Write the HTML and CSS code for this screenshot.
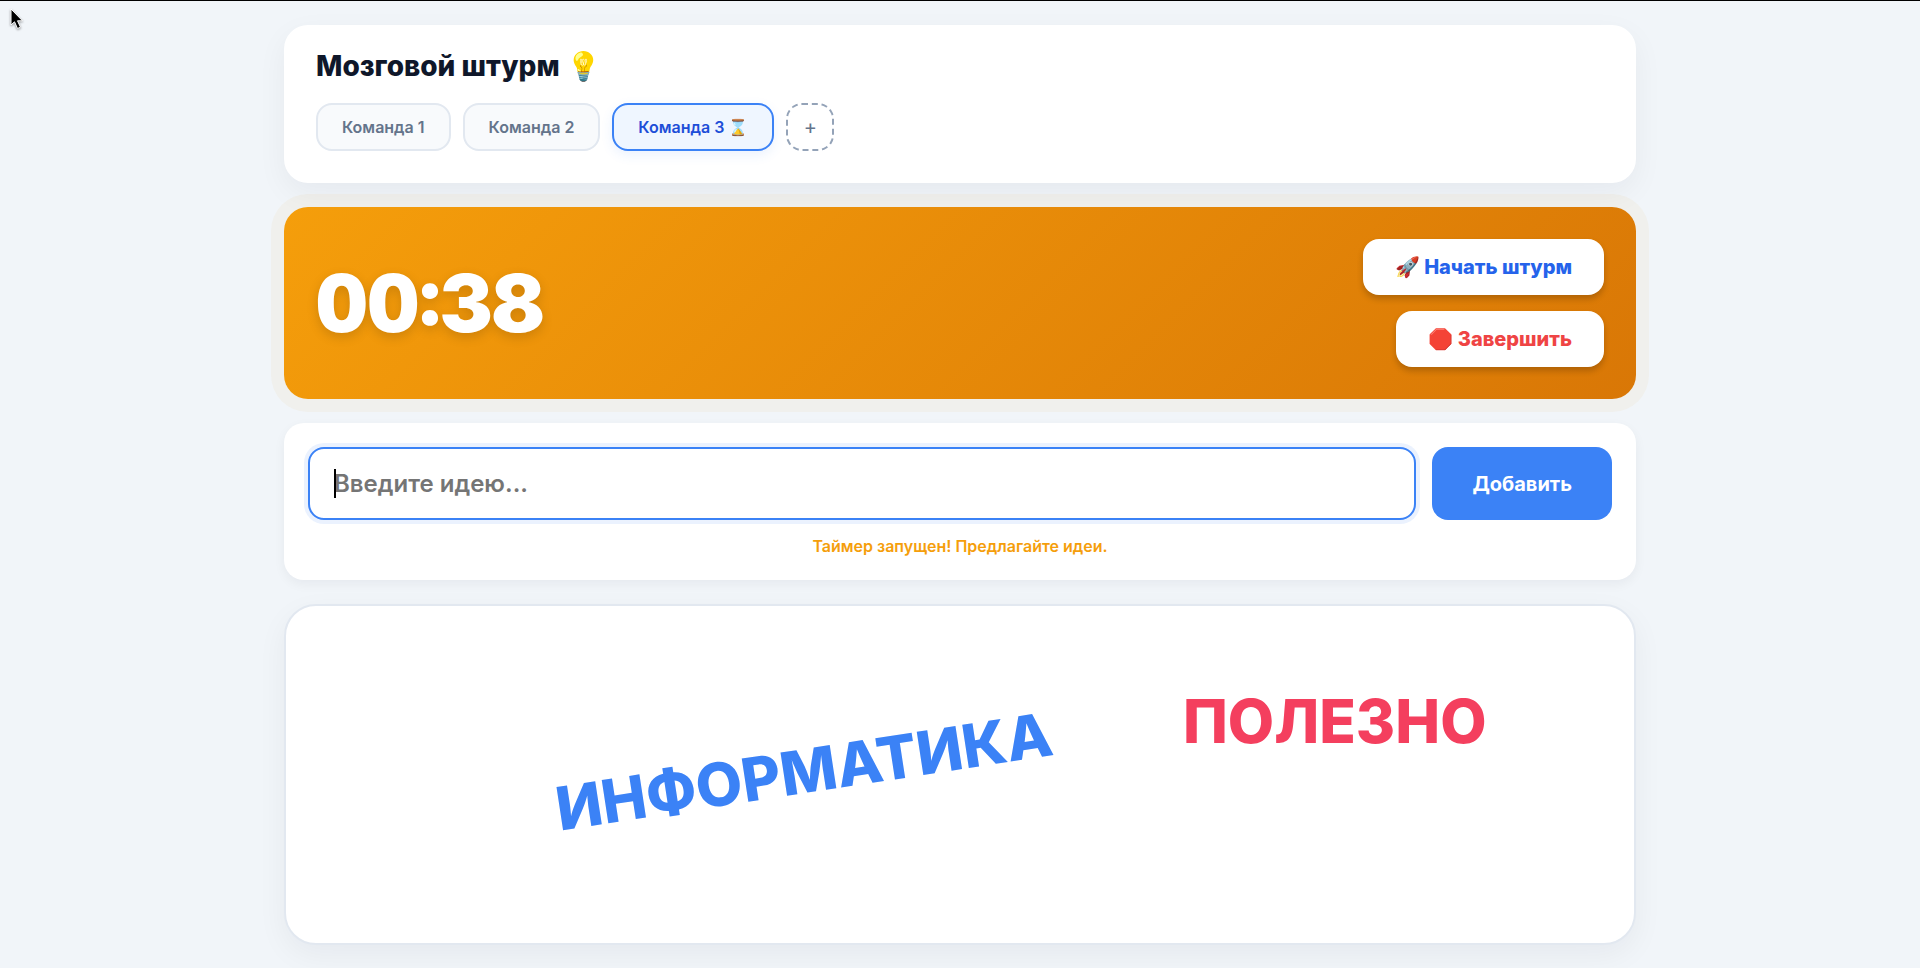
FILE: index.html
```html
<!DOCTYPE html>
<html lang="ru">
<head>
    <meta charset="UTF-8">
    <meta name="viewport" content="width=device-width, initial-scale=1.0">
    <title>Мозговой штурм</title>
    <link rel="stylesheet" href="styles.css">
</head>
<body>
<div class="container">
    <header class="header">
        <h1>Мозговой штурм 💡</h1>
        <div class="teams">
            <button class="team" type="button">Команда 1</button>
            <button class="team" type="button">Команда 2</button>
            <button class="team active" type="button">Команда 3 ⌛</button>
            <button class="team add" type="button" aria-label="Добавить команду">+</button>
        </div>
    </header>

    <section class="timer">
        <div class="time" id="time">00:38</div>
        <div class="controls">
            <button class="btn start" type="button">🚀 Начать штурм</button>
            <button class="btn stop" type="button">🛑 Завершить</button>
        </div>
    </section>

    <form class="idea-form" onsubmit="return false">
        <div class="row">
            <div class="field">
                <input type="text" id="ideaInput" placeholder="Введите идею..." aria-label="Введите идею" autocomplete="off">
                <span class="caret"></span>
            </div>
            <button class="send" type="submit">Добавить</button>
        </div>
        <p class="hint">Таймер запущен! Предлагайте идеи.</p>
    </form>

    <main class="cloud">
        <span class="word informatics">ИНФОРМАТИКА</span>
        <span class="word useful">ПОЛЕЗНО</span>
    </main>
</div>

<svg class="cursor" width="16" height="24" viewBox="0 0 16 24" aria-hidden="true">
    <path d="M1 1v16l3.500-3.200 3 6.700 3-1.300-3-6.400h5z" fill="#000" stroke="#fff" stroke-width="1"/>
</svg>
</body>
</html>
```
FILE: styles.css
```css
* {
    box-sizing: border-box;
    margin: 0;
    padding: 0;
}
body {
    font-family: Inter, "Noto Sans", sans-serif;
    background-color: #f1f5f9;
    color: #0f172a;
    border-top: 1px solid #000;
    overflow: hidden;
}
button, input {
    font-family: inherit;
}
button {
    cursor: pointer;
}
.container {
    max-width: 1400px;
    min-height: 100vh;
    margin: 0 auto;
    padding: 24px;
    display: flex;
    flex-direction: column;
    gap: 24px;
}

/* header */
.header {
    background-color: #fff;
    border-radius: 24px;
    padding: 24px 32px 32px;
    box-shadow: 0 10px 30px rgba(15, 23, 42, 0.05);
}
h1 {
    font-size: 28px;
    line-height: 34px;
    font-weight: 800;
    margin-bottom: 20px;
}
.teams {
    display: flex;
    flex-wrap: wrap;
    gap: 12px;
}
.team {
    height: 48px;
    padding: 0 24px;
    border: 2px solid #e2e8f0;
    border-radius: 16px;
    background-color: #f8fafc;
    color: #64748b;
    font-size: 16px;
    font-weight: 600;
}
.team.active {
    background-color: #eff6ff;
    border-color: #3b82f6;
    color: #1d4ed8;
    box-shadow: 0 4px 12px rgba(59, 130, 246, 0.1);
}
.team.add {
    width: 48px;
    padding: 0;
    border: 2px dashed #94a3b8;
    background-color: #fff;
    font-size: 20px;
    font-weight: 400;
}

/* timer */
.timer {
    display: flex;
    justify-content: space-between;
    align-items: center;
    padding: 32px;
    border-radius: 24px;
    background: linear-gradient(135deg, #f59e0b, #d97706);
    box-shadow: 0 0 0 13px rgba(245, 158, 11, 0.05);
}
.time {
    color: #fff;
    font-size: 80px;
    line-height: 80px;
    font-weight: 900;
    font-variant-numeric: tabular-nums;
    text-shadow: 0 4px 12px rgba(0, 0, 0, 0.15);
}
.controls {
    display: flex;
    flex-direction: column;
    align-items: flex-end;
    gap: 16px;
}
.btn {
    padding: 16px 32px;
    border: none;
    border-radius: 16px;
    background-color: #fff;
    font-size: 20px;
    line-height: 24px;
    font-weight: 800;
    box-shadow: 0 4px 6px rgba(0, 0, 0, 0.2);
}
.start {
    color: #2563eb;
}
.stop {
    color: #ef4444;
}

/* idea input */
.idea-form {
    background-color: #fff;
    border-radius: 20px;
    padding: 24px;
    box-shadow: 0 4px 12px rgba(15, 23, 42, 0.05);
}
.row {
    display: flex;
    gap: 16px;
}
.field {
    position: relative;
    flex: 1;
}
#ideaInput {
    display: block;
    width: 100%;
    height: 73px;
    padding: 0 24px;
    border: 2px solid #3b82f6;
    border-radius: 16px;
    outline: none;
    background-color: #fff;
    font-size: 24px;
    font-weight: 600;
    box-shadow: 0 0 0 4px rgba(59, 130, 246, 0.1);
}
#ideaInput::placeholder {
    color: #757575;
}
.caret {
    position: absolute;
    left: 26px;
    top: 22px;
    width: 2px;
    height: 29px;
    background-color: #000;
}
.send {
    padding: 0 40px;
    border: none;
    border-radius: 16px;
    background-color: #3b82f6;
    color: #fff;
    font-size: 20px;
    font-weight: 700;
}
.hint {
    margin-top: 16px;
    text-align: center;
    color: #f59e0b;
    font-size: 16px;
    line-height: 20px;
    font-weight: 600;
}

/* word cloud */
.cloud {
    position: relative;
    flex: 1;
    min-height: 240px;
    background-color: #fff;
    border: 2px solid #e2e8f0;
    border-radius: 32px;
    box-shadow: 0 10px 30px rgba(15, 23, 42, 0.05);
    overflow: hidden;
}
.word {
    position: absolute;
    font-size: 60px;
    line-height: 72px;
    font-weight: 800;
    white-space: nowrap;
}
.informatics {
    left: 38.4%;
    top: 49%;
    color: #3b82f6;
    transform: translate(-50%, -50%) rotate(-8.7deg);
}
.useful {
    left: 77.8%;
    top: 34%;
    color: #f43f5e;
    transform: translate(-50%, -50%);
}

.cursor {
    position: absolute;
    left: 10px;
    top: 8px;
    filter: drop-shadow(0 1px 1px rgba(0, 0, 0, 0.4));
}
```
